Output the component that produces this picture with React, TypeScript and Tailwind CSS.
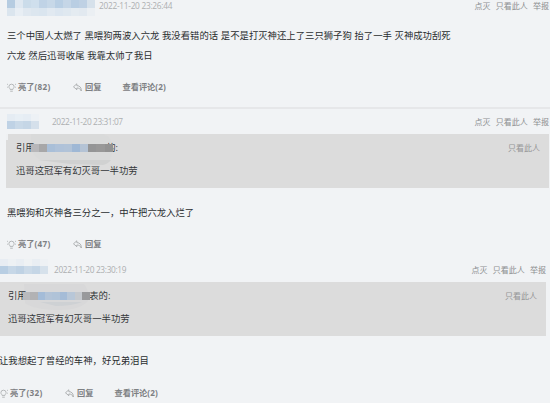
import React from 'react';

interface Quote {
  tail: string;
  text: string;
  mosaic: string[];
}

interface Comment {
  time: string;
  lines: string[];
  likes: number;
  replies?: number;
  quote?: Quote;
}

const first: Comment = {
  time: '2022-11-20 23:26:44',
  lines: [
    '三个中国人太燃了 黑喂狗两波入六龙 我没看错的话 是不是打灭神还上了三只狮子狗 抬了一手 灭神成功刮死',
    '六龙 然后迅哥收尾 我靠太帅了我日',
  ],
  likes: 82,
  replies: 2,
};

const second: Comment = {
  time: '2022-11-20 23:31:07',
  lines: ['黑喂狗和灭神各三分之一，中午把六龙入烂了'],
  likes: 47,
  quote: {
    tail: '的:',
    text: '迅哥这冠军有幻灭哥一半功劳',
    mosaic: ['#b7b7ba', '#a7a7a8', '#a9bfd8', '#afc2d9', '#b1c3d8', '#9fb8d5', '#b4c3d5', '#949596', '#989898', '#929292'],
  },
};

const third: Comment = {
  time: '2022-11-20 23:30:19',
  lines: ['让我想起了曾经的车神，好兄弟泪目'],
  likes: 32,
  replies: 2,
  quote: {
    tail: '表的:',
    text: '迅哥这冠军有幻灭哥一半功劳',
    mosaic: ['#b9babd', '#b2b2b4', '#a4bcd8', '#b3c4d8', '#b0c3d8', '#a5bcd7', '#b8c7d8', '#c5c9ce', '#98999b'],
  },
};

const Mosaic = ({ colors, className }: { colors: string[]; className: string }) => (
  <div className={`flex ${className}`}>
    {colors.map((color, i) => (
      <span key={i} className="h-full flex-1" style={{ backgroundColor: color }} />
    ))}
  </div>
);

const BulbIcon = () => (
  <svg className="h-[9px] w-[9px] shrink-0" viewBox="0 0 9 9" fill="none" stroke="#a2a4a6" strokeWidth="0.75">
    <path d="M3.1 6.4C3.1 5.5 1.9 5.1 1.9 3.7a2.6 2.5 0 0 1 5.2 0c0 1.4-1.2 1.8-1.2 2.7zM3.2 8.2h2.6M0 1l.9.6M9 1l-.9.6M0 4.2h.8M8.2 4.2H9" />
  </svg>
);

const ReplyIcon = () => (
  <svg className="h-[9px] w-[9px] shrink-0" viewBox="0 0 9 9" fill="none" stroke="#9a9c9e" strokeWidth="0.75">
    <path d="M3.8.8.5 3.8l3.3 2.9V5c2.1-.1 3.2.6 4.5 3C8.4 4.7 7 2.7 3.8 2.6z" strokeLinejoin="round" />
  </svg>
);

const HeaderActions = () => (
  <div className="ml-auto flex gap-[5.3px] text-[8px] text-[#8c8e90]">
    <span>点灭</span>
    <span>只看此人</span>
    <span>举报</span>
  </div>
);

const Footer = ({ comment }: { comment: Comment }) => (
  <div className="flex h-3 items-center text-[8.2px] font-bold text-[#7d8083]">
    <BulbIcon />
    <span className="ml-[2px] w-[55px]">
      亮了<span className="tracking-[0.3px]">({comment.likes})</span>
    </span>
    <ReplyIcon />
    <span className="ml-[3px] w-[37.5px]">回复</span>
    {comment.replies && (
      <span>
        查看评论<span className="tracking-[0.1px]">({comment.replies})</span>
      </span>
    )}
  </div>
);

const Body = ({ lines }: { lines: string[] }) => (
  <div className="text-[9.37px] leading-5 text-[#2a2d2f] [word-spacing:0.2px]">
    {lines.map((line) => (
      <p key={line}>{line}</p>
    ))}
  </div>
);

const QuoteBox = ({ quote, wide, className }: { quote: Quote; wide?: boolean; className: string }) => (
  <div className={`relative h-[54px] bg-[#dcdcdc] text-[9.37px] text-[#34373a] ${className}`}>
    {wide ? (
      <svg className="absolute top-0 left-0 h-[32px] w-[115px]" viewBox="0 0 115 32">
        <path d="M0 0H2V6H0z" fill="#eff1f3" />
        <path d="M25 0H97L103 3Q108 12 106 20Q104 27 99 30L75 27L36 27Q27 22 25 14z" fill="#d9dada" />
        <path d="M32 26H105Q102 30 97 31L64 30z" fill="#d0d1d1" />
      </svg>
    ) : (
      <svg className="absolute top-0 left-0 h-[32px] w-[115px]" viewBox="0 0 115 32">
        <path d="M24 2H84Q91 11 88 19Q80 28 60 28Q34 28 25 21z" fill="#d8d8d9" />
        <path d="M40 20H82Q72 24 56 24z" fill="#ced1d4" />
      </svg>
    )}
    <div className="relative flex h-[28px] items-center">
      <span>引用</span>
      <Mosaic
        colors={quote.mosaic}
        className={wide ? 'relative z-10 -ml-[4px] h-[8px] w-[82px]' : 'relative z-10 -ml-[4px] h-[8px] w-[67px]'}
      />
      <span className={wide ? '-ml-[6.5px]' : '-ml-[0.5px]'}>{quote.tail}</span>
      <span className="ml-auto text-[8px] text-[#949596]">只看此人</span>
    </div>
    <p className="relative leading-[17px]">{quote.text}</p>
  </div>
);

const Time = ({ value, className }: { value: string; className: string }) => (
  <span className={`h-3 text-[8.3px] leading-3 text-[#adafb1] ${className}`}>{value}</span>
);

const App = () => {
  return (
    <div className="h-[403px] w-[550px] overflow-hidden bg-[#f1f3f5] font-['Open_Sans','Noto_Sans_CJK_SC',sans-serif] whitespace-nowrap">
      <section className="h-[109px] border-b-2 border-[#e6e7e9] pr-[1px] pl-[7px]">
        <div className="flex h-[26px]">
          <div className="w-[92px]">
            <Mosaic
              colors={['#b6cce1', '#dfe8f1', '#cbdcea', '#cfdfed', '#c0d3e6', '#c7d8e8', '#b9cfe4', '#c5d6e7', '#b9cee3', '#bfd1e4', '#d6e1eb']}
              className="h-[8px] w-[88px]"
            />
            <Mosaic
              colors={['#dbe5ee', '#e8eef4', '#e0e8f0', '#dce6ef', '#dae5ef', '#e1e9f1', '#dce6f0', '#dfe8f0', '#e4ebf1', '#e2e9f0', '#ebeff3']}
              className="h-[8px] w-[88px]"
            />
          </div>
          <Time value={first.time} className="tracking-[-0.27px]" />
          <div className="ml-auto h-3 leading-3">
            <HeaderActions />
          </div>
        </div>
        <Body lines={first.lines} />
        <div className="mt-[15px]">
          <Footer comment={first} />
        </div>
      </section>

      <section className="h-[153px] pr-[1px] pl-[7px]">
        <div className="flex h-[25px] items-center">
          <div className="w-[45px]">
            <Mosaic colors={['#e5ecf3', '#e8eff5', '#e6edf4', '#edf1f5']} className="h-[7px] w-[32px]" />
            <Mosaic colors={['#bfd2e5', '#c9d9e8', '#c5d6e6', '#d5e0eb']} className="h-[8px] w-[32px]" />
          </div>
          <Time value={second.time} className="tracking-[-0.4px]" />
          <HeaderActions />
        </div>
        <QuoteBox quote={second.quote!} wide className="-ml-px pr-[9px] pl-[10px]" />
        <div className="mt-[15px]">
          <Body lines={second.lines} />
        </div>
        <div className="mt-[15px]">
          <Footer comment={second} />
        </div>
      </section>

      <section className="pr-[4px]">
        <div className="flex h-[20px] items-start">
          <div className="-mt-[3px] w-[54px]">
            <Mosaic colors={['#e8edf3', '#edf1f4', '#e9eef3', '#eff2f4', '#e9eef3', '#eef1f4']} className="h-[7px] w-[48px]" />
            <Mosaic colors={['#b8cee3', '#c6d7e7', '#bfd2e4', '#cbdae8', '#c5d6e6', '#d6e1eb']} className="h-[8px] w-[48px]" />
          </div>
          <div className="mt-[2px] flex leading-3">
            <Time value={third.time} className="tracking-[-0.32px]" />
          </div>
          <div className="mt-[2px] ml-auto leading-3">
            <HeaderActions />
          </div>
        </div>
        <QuoteBox quote={third.quote!} className="pr-[9px] pl-[8px]" />
        <div className="mt-[15px] -ml-[1px]">
          <Body lines={third.lines} />
        </div>
        <div className="mt-[16px] -ml-[1px]">
          <Footer comment={third} />
        </div>
      </section>
    </div>
  );
};

export default App;
